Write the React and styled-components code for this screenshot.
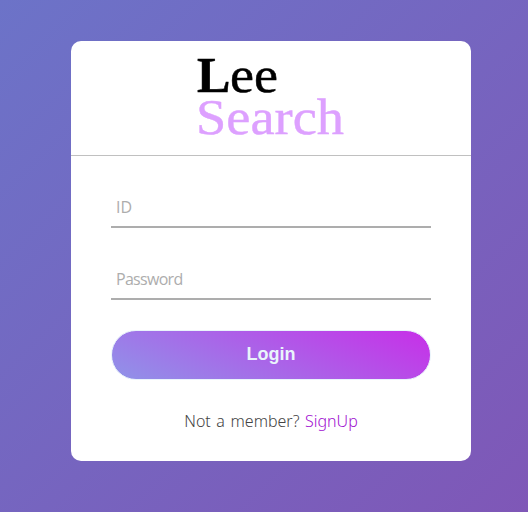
import React from 'react';
import styled, { createGlobalStyle } from 'styled-components';

const GlobalStyle = createGlobalStyle`
  * { box-sizing: border-box; }
  html, body { margin: 0; padding: 0; overflow: hidden; }
`;

const Page = styled.main`
  height: 512px;
  padding: 41px 0 0 71px;
  background: linear-gradient(135deg, #6c73c8 0%, #7f57b7 100%);
  font-family: 'Noto Sans', 'Open Sans', sans-serif;
`;

const Card = styled.section`
  width: 400px;
  height: 420px;
  background: #fff;
  border-radius: 10px;
`;

const Header = styled.header`
  height: 115px;
  border-bottom: 1px solid #c0c0c0;
  display: flex;
  justify-content: center;
  padding-top: 12px;
`;

const Logo = styled.svg`
  display: block;
  width: 160px;
  height: 92px;
  overflow: visible;
  font-family: 'Liberation Serif', serif;
  font-size: 50px;
`;

const Form = styled.form`
  padding: 31px 40px 0;
`;

const Field = styled.input`
  display: block;
  width: 100%;
  height: 41px;
  margin-bottom: 31px;
  padding: 0 5px;
  border: 0;
  border-bottom: 2px solid #adadad;
  background: none;
  outline: none;
  font: 16px 'Open Sans', sans-serif;
  &::placeholder {
    color: #adadad;
    opacity: 1;
    letter-spacing: ${(p) => p.$tracking || '0'};
  }
`;

const LoginButton = styled.button`
  display: block;
  width: 100%;
  height: 50px;
  margin-top: -1px;
  padding: 0 0 1px;
  border: 1px solid #e9f4fb;
  border-radius: 25px;
  background: linear-gradient(25deg, #8f94e8, #c82ee8) border-box;
  color: #e9f4fb;
  font: bold 18px 'Liberation Sans', sans-serif;
`;

const SignUp = styled.p`
  margin: 30px 0 0;
  text-align: center;
  font-size: 16px;
  font-weight: 300;
  line-height: 22px;
  word-spacing: 1.4px;
  color: #444;
`;

const Link = styled.a`
  color: #a010d0;
`;

export default function App() {
  return (
    <>
      <GlobalStyle />
      <Page>
        <Card>
          <Header>
            <Logo viewBox="0 0 160 92">
              <text y="39" stroke="#000" strokeWidth="0.5">
                <tspan x="6" fontWeight="bold">L</tspan>
                <tspan x="39" textLength="48" lengthAdjust="spacingAndGlyphs">ee</tspan>
              </text>
              <text x="5" y="81" fill="#dda0ff" stroke="#dda0ff" strokeWidth="0.4" textLength="148" lengthAdjust="spacingAndGlyphs">Search</text>
            </Logo>
          </Header>
          <Form>
            <Field placeholder="ID" />
            <Field placeholder="Password" type="password" $tracking="-0.7px" />
            <LoginButton type="button">Login</LoginButton>
            <SignUp>Not a member? <Link>SignUp</Link></SignUp>
          </Form>
        </Card>
      </Page>
    </>
  );
}
